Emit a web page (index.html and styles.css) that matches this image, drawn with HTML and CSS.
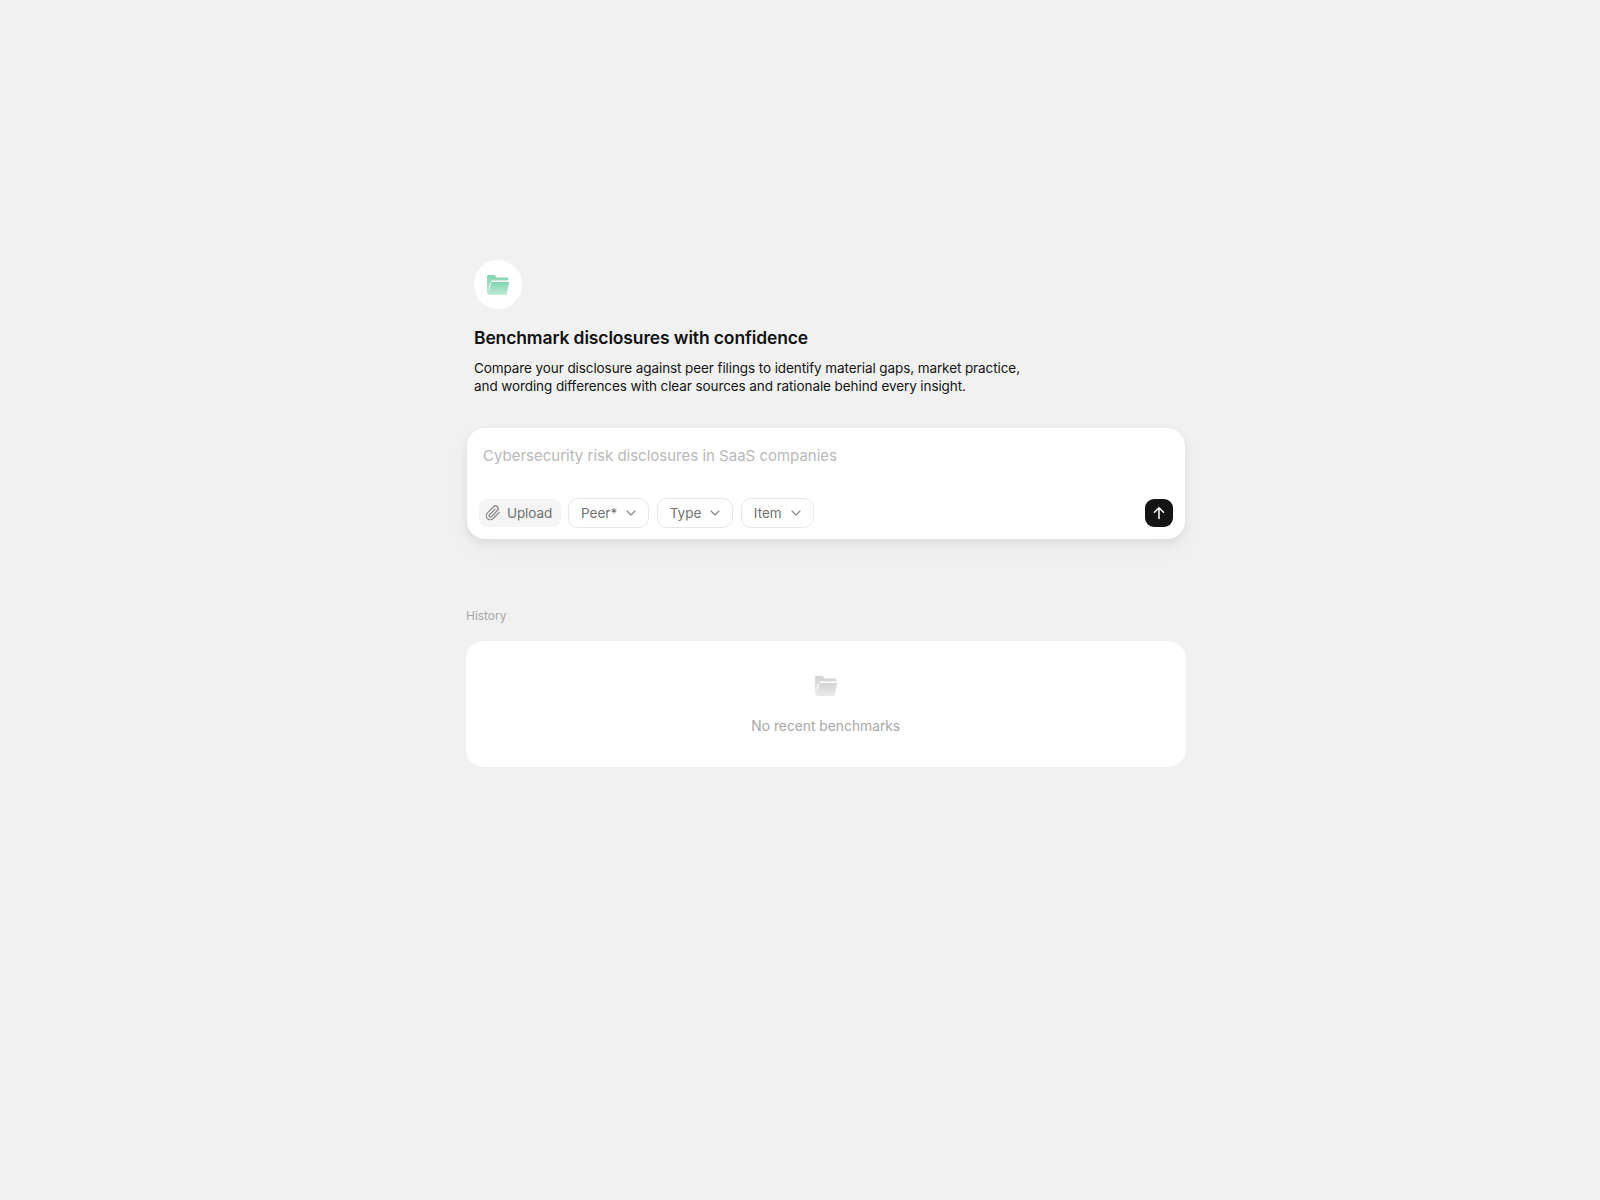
FILE: index.html
```html
<!DOCTYPE html>
<html lang="en">
<head>
  <meta charset="UTF-8" />
  <title>Benchmark</title>
  <link rel="stylesheet" href="styles.css">
</head>
<body>
  <main class="page">
    <section class="intro">
      <div class="intro-icon">
        <svg width="24" height="22" viewBox="0 0 24 22">
          <defs>
            <linearGradient id="folderGreen" x1="0" y1="0" x2="0" y2="1">
              <stop offset="0" stop-color="#7fd3ae" />
              <stop offset="1" stop-color="#c4ebd9" />
            </linearGradient>
          </defs>
          <path d="M1 2.500C1 1.700 1.600 1 2.400 1h6l2.400 2.600h10.200c.8 0 1.400.6 1.400 1.400v1.600H6L3 12v8H2.400C1.600 20 1 19.400 1 18.600z" fill="url(#folderGreen)" />
          <path d="M5.500 8h17.700L20.500 21H1.800z" fill="url(#folderGreen)" />
        </svg>
      </div>
      <h1>Benchmark disclosures with confidence</h1>
      <p>Compare your disclosure against peer filings to identify material gaps, market practice,<br>and wording differences with clear sources and rationale behind every insight.</p>
    </section>

    <section class="composer">
      <input class="prompt" type="text" placeholder="Cybersecurity risk disclosures in SaaS companies" />
      <div class="toolbar">
        <button class="upload">
          <svg width="16" height="16" viewBox="0 0 24 24" fill="none" stroke="#8c8c8c" stroke-width="2" stroke-linecap="round" stroke-linejoin="round">
            <path d="M21.400 11.100l-9.200 9.200a6 6 0 0 1-8.500-8.500l9.200-9.200a4 4 0 0 1 5.700 5.700l-9.200 9.200a2 2 0 0 1-2.800-2.800l8.500-8.500" />
          </svg>
          Upload
        </button>
        <button class="pill">Peer*
          <svg class="chevron" width="12" height="12" viewBox="0 0 12 12"><path d="M2 4l4 4 4-4" /></svg>
        </button>
        <button class="pill">Type
          <svg class="chevron" width="12" height="12" viewBox="0 0 12 12"><path d="M2 4l4 4 4-4" /></svg>
        </button>
        <button class="pill">Item
          <svg class="chevron" width="12" height="12" viewBox="0 0 12 12"><path d="M2 4l4 4 4-4" /></svg>
        </button>
        <button class="send">
          <svg width="14" height="14" viewBox="0 0 14 14" fill="none" stroke="#fff" stroke-width="1.500" stroke-linecap="round" stroke-linejoin="round">
            <path d="M7 12.500V1.800M2.500 6.200L7 1.800l4.500 4.400" />
          </svg>
        </button>
      </div>
    </section>

    <section class="history">
      <h2>History</h2>
      <div class="history-card">
        <svg width="24" height="22" viewBox="0 0 24 22">
          <defs>
            <linearGradient id="folderGrey" x1="0" y1="0" x2="0" y2="1">
              <stop offset="0" stop-color="#d2d2d2" />
              <stop offset="1" stop-color="#ebebeb" />
            </linearGradient>
          </defs>
          <path d="M1 2.500C1 1.700 1.600 1 2.400 1h6l2.400 2.600h10.200c.8 0 1.400.6 1.400 1.400v1.600H6L3 12v8H2.400C1.600 20 1 19.400 1 18.600z" fill="url(#folderGrey)" />
          <path d="M5.500 8h17.700L20.500 21H1.800z" fill="url(#folderGrey)" />
        </svg>
        <p>No recent benchmarks</p>
      </div>
    </section>
  </main>
</body>
</html>
```

FILE: styles.css
```css
body {
  margin: 0;
  background: #f1f1f1;
  font-family: Inter, "Liberation Sans", sans-serif;
  color: #111;
}

.page {
  width: 720px;
  margin: 0 auto;
  padding: 260px 0 0 52px;
}

.intro {
  padding-left: 8px;
}

.intro-icon {
  width: 48.500px;
  height: 49px;
  margin-left: -0.500px;
  border-radius: 50%;
  background: #fff;
  display: flex;
  align-items: center;
  justify-content: center;
}

.intro h1 {
  font-size: 17.500px;
  font-weight: 600;
  line-height: 24px;
  margin: 17px 0 0;
  letter-spacing: -0.13px;
}

.intro p {
  font-size: 13.500px;
  line-height: 18px;
  margin: 9px 0 0;
  letter-spacing: -0.09px;
  color: #141414;
}

.composer {
  margin: 33px 1px 0;
  height: 111px;
  box-sizing: border-box;
  background: #fff;
  border-radius: 18px;
  box-shadow: 0 4px 10px rgba(0, 0, 0, 0.07), 0 10px 24px rgba(0, 0, 0, 0.03);
  padding: 18px 12px 11px;
  display: flex;
  flex-direction: column;
  justify-content: space-between;
}

.prompt {
  border: none;
  outline: none;
  background: none;
  padding: 0 4px;
  font-family: inherit;
  font-size: 15px;
  line-height: 20px;
  color: #111;
}

.prompt::placeholder {
  color: #b8b8b8;
}

.toolbar {
  display: flex;
  align-items: center;
  gap: 7.500px;
}

.toolbar button {
  font-family: inherit;
  font-size: 13.500px;
  color: #717171;
  cursor: pointer;
}

.upload {
  height: 28px;
  display: flex;
  align-items: center;
  gap: 6px;
  padding: 0 8.500px 0 6px;
  border: none;
  border-radius: 8px;
  background: #f5f5f5;
  letter-spacing: -0.1px;
}

.pill {
  height: 30px;
  display: flex;
  align-items: center;
  gap: 8px;
  padding: 0 11px 0 12px;
  border: 1px solid #e8e8e8;
  border-radius: 10px;
  background: #fff;
}

.chevron {
  fill: none;
  stroke: #858585;
  stroke-width: 1.100;
  stroke-linecap: round;
  stroke-linejoin: round;
}

.send {
  margin-left: auto;
  width: 28px;
  height: 28px;
  padding: 0;
  border: none;
  border-radius: 9px;
  background: #141414;
  display: flex;
  align-items: center;
  justify-content: center;
}

.history {
  margin-top: 69px;
}

.history h2 {
  font-size: 12px;
  font-weight: 400;
  line-height: 16px;
  margin: 0 0 17px;
  letter-spacing: -0.03px;
  color: #a8a8a8;
}

.history-card {
  height: 126px;
  margin-right: 0.500px;
  box-sizing: border-box;
  background: #fff;
  border-radius: 18px;
  padding-top: 34px;
  display: flex;
  flex-direction: column;
  align-items: center;
}

.history-card p {
  font-size: 13.800px;
  line-height: 18px;
  margin: 20px 0 0;
  color: #a8a8a8;
}
```
